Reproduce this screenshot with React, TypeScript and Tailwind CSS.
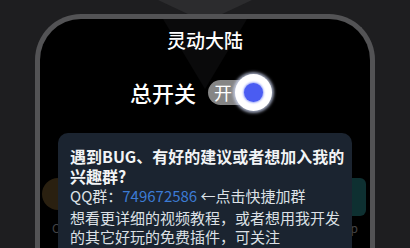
export default function App() {
    return (
        <div
            className="relative h-[248px] w-[410px] overflow-hidden bg-[#1e1e20] pl-[35px] pt-[14px]"
            style={{ fontFamily: '"Noto Sans CJK SC", "Noto Sans", sans-serif' }}
        >
            <svg className="absolute left-0 top-0" width="410" height="40">
                <polygon points="158,0 252,0 205,22" fill="#2c2c2e" />
            </svg>

            <div className="relative h-[260px] w-[340px] rounded-t-[46px] border-[5px] border-b-0 border-[#535355] bg-black">
                <svg className="absolute left-0 top-0" width="330" height="90">
                    <polygon points="123,0 207,0 165,70" fill="#0a0a0b" />
                </svg>

                <div className="relative flex flex-col">
                    <h1 className="mt-[9px] text-center text-[19px] font-medium leading-[24px] text-white">
                        灵动大陆
                    </h1>

                    <div className="mt-[22px] flex items-center pl-[90px]">
                        <span className="text-[22px] font-medium leading-[36px] text-white">总开关</span>
                        <div className="relative ml-[12px] flex h-[25px] w-[58px] items-center rounded-full bg-[#858585] pl-[6px]">
                            <span className="text-[18px] leading-[25px] text-white">开</span>
                            <div className="absolute left-[27px] top-[-6px] flex h-[37px] w-[37px] items-center justify-center rounded-full bg-white shadow-[0_0_3px_2px_rgba(215,225,255,0.7)]">
                                <div className="h-[19px] w-[19px] rounded-full bg-[#4a5cf2] shadow-[0_0_2px_1px_rgba(90,110,245,0.6)]" />
                            </div>
                        </div>
                    </div>

                    <div className="mt-[68px] flex items-start justify-between pl-[2px] pr-[4px]">
                        <div className="h-[32px] w-[32px] rounded-full bg-[#2a2010]" />
                        <div className="h-[38px] w-[60px] rounded-[6px] bg-[#0e3031]" />
                    </div>
                    <div className="mt-[4px] flex justify-between px-[12px] text-[12px] leading-[16px] text-[#444446]">
                        <span>C</span>
                        <span>p</span>
                    </div>
                </div>

                <div className="absolute left-[18px] top-[114px] h-[140px] w-[294px] rounded-[10px] bg-[#1b2430] pl-[12px] pt-[13px]">
                    <p className="whitespace-nowrap text-[16px] font-bold leading-[20px] text-[#f2f4f6]">
                        遇到BUG、有好的建议或者想加入我的
                        <br />
                        兴趣群?
                    </p>
                    <p className="whitespace-nowrap text-[15px] leading-[20px] text-[#dde1e6]">
                        QQ群：<span className="text-[#3c7bd4]">749672586</span> ←点击快捷加群
                    </p>
                    <p className="mt-[2px] whitespace-nowrap text-[15px] leading-[19px] text-[#dde1e6]">
                        想看更详细的视频教程，或者想用我开发
                        <br />
                        的其它好玩的免费插件，可关注
                    </p>
                </div>
            </div>
        </div>
    );
}
